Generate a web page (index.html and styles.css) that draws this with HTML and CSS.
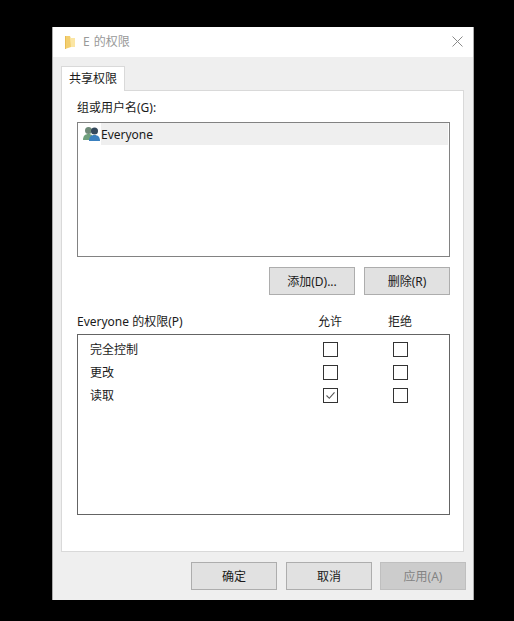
FILE: index.html
```html
<!DOCTYPE html>
<html lang="zh-CN">
<head>
    <meta charset="UTF-8">
    <title>E 的权限</title>
    <link rel="stylesheet" href="styles.css">
</head>
<body>
    <div class="dialog">
        <div class="titlebar">
            <svg class="folder-icon" width="10" height="15" viewBox="0 0 10 15">
                <path d="M0 1h5l1 3v8l-6 2z" fill="#f3cf70"/>
                <path d="M5 3h5v9H6z" fill="#fbe6a4"/>
                <path d="M0 1h1v13H0z" fill="#e9bd55"/>
            </svg>
            <span class="title">E 的权限</span>
            <svg class="close-icon" width="11" height="11" viewBox="0 0 11 11">
                <path d="M.5.5l10 10M10.5.5l-10 10" stroke="#8a8a8a" stroke-width="1" fill="none"/>
            </svg>
        </div>
        <div class="body">
            <div class="tabs">
                <div class="tab">共享权限</div>
            </div>
            <div class="panel">
                <div class="label">组或用户名(G):</div>
                <div class="user-list">
                    <div class="user-row">
                        <svg class="users-icon" width="17" height="16" viewBox="0 0 17 16">
                            <circle cx="5.5" cy="4.5" r="3.500" fill="#6f8a78"/>
                            <path d="M0 14c0-4 2-6 5.500-6s5 2 5 6z" fill="#6fa07c"/>
                            <circle cx="11.500" cy="5" r="3.500" fill="#34495c"/>
                            <path d="M6 15c0-4 2-6 5.500-6s5.500 2 5.500 6z" fill="#3a80bf"/>
                        </svg>
                        <span class="user-name">Everyone</span>
                    </div>
                </div>
                <div class="list-buttons">
                    <button class="btn">添加(D)...</button>
                    <button class="btn">删除(R)</button>
                </div>
                <div class="perm-header">
                    <span class="perm-title">Everyone 的权限(P)</span>
                    <span class="perm-col">允许</span>
                    <span class="perm-col">拒绝</span>
                </div>
                <div class="perm-list">
                    <div class="perm-row">
                        <span class="perm-name">完全控制</span>
                        <span class="cell"><span class="check"></span></span>
                        <span class="cell"><span class="check"></span></span>
                    </div>
                    <div class="perm-row">
                        <span class="perm-name">更改</span>
                        <span class="cell"><span class="check"></span></span>
                        <span class="cell"><span class="check"></span></span>
                    </div>
                    <div class="perm-row">
                        <span class="perm-name">读取</span>
                        <span class="cell">
                            <span class="check">
                                <svg width="11" height="11" viewBox="0 0 11 11">
                                    <path d="M1.500 5.500l2.800 2.800 5.200-6" stroke="#555" stroke-width="1.100" fill="none"/>
                                </svg>
                            </span>
                        </span>
                        <span class="cell"><span class="check"></span></span>
                    </div>
                </div>
            </div>
            <div class="footer">
                <button class="btn">确定</button>
                <button class="btn">取消</button>
                <button class="btn disabled">应用(A)</button>
            </div>
        </div>
    </div>
</body>
</html>
```

FILE: styles.css
```css
body {
    margin: 0;
    background-color: #000;
    font-family: "Noto Sans", "Noto Sans CJK SC", sans-serif;
    font-size: 12px;
    color: #1a1a1a;
}

.dialog {
    width: 420px;
    height: 573px;
    margin: 27px 0 0 52px;
    border-left: 1px solid #aaa;
    border-right: 1px solid #aaa;
    background-color: #efefef;
}

.titlebar {
    display: flex;
    align-items: center;
    height: 30px;
    padding: 0 10px 0 12px;
    background-color: #fff;
}

.folder-icon {
    margin-right: 8px;
}

.title {
    flex: 1;
    color: #999;
    font-size: 12px;
    word-spacing: 1px;
    line-height: 30px;
    height: 30px;
}

.close-icon {
    margin-bottom: 1px;
}

.body {
    padding: 9px 9px 0 8px;
}

.tabs {
    display: flex;
}

.tab {
    width: 62px;
    height: 24px;
    line-height: 24px;
    text-align: center;
    background-color: #fff;
    border: 1px solid #d9d9d9;
    border-bottom: none;
    position: relative;
    z-index: 1;
}

.panel {
    height: 462px;
    margin-top: -1px;
    padding: 0 14px 0 15px;
    background-color: #fff;
    border: 1px solid #d9d9d9;
    box-sizing: border-box;
    width: 403px;
}

.label {
    height: 16px;
    line-height: 16px;
    margin-top: 9px;
    margin-bottom: 6px;
}

.user-list {
    height: 135px;
    border: 1px solid #828282;
    box-sizing: border-box;
    padding: 0 1px;
    width: 373px;
}

.user-row {
    display: flex;
    align-items: center;
    height: 22px;
}

.users-icon {
    margin: 0 1px 0 4px;
    flex-shrink: 0;
}

.user-name {
    flex: 1;
    height: 22px;
    line-height: 23px;
    background-color: #efefef;
}

.list-buttons {
    display: flex;
    justify-content: flex-end;
    gap: 9px;
    margin-top: 10px;
    width: 373px;
}

.btn {
    width: 86px;
    height: 28px;
    padding: 0 0 1px;
    background-color: #e1e1e1;
    border: 1px solid #adadad;
    font-family: inherit;
    font-size: 12px;
    color: #1a1a1a;
}

.btn.disabled {
    background-color: #ccc;
    border-color: #bfbfbf;
    color: #838383;
}

.perm-header {
    display: flex;
    align-items: center;
    height: 16px;
    margin-top: 18px;
    margin-bottom: 5px;
    width: 373px;
}

.perm-title {
    width: 218px;
}

.perm-col {
    width: 70px;
    text-align: center;
}

.perm-list {
    height: 181px;
    width: 373px;
    padding-top: 3px;
    border: 1px solid #646464;
    box-sizing: border-box;
}

.perm-row {
    display: flex;
    align-items: center;
    height: 23px;
}

.perm-name {
    width: 217px;
    padding: 0 0 2px 12px;
    box-sizing: border-box;
}

.cell {
    display: flex;
    justify-content: center;
    width: 70px;
}

.check {
    display: flex;
    align-items: center;
    justify-content: center;
    width: 13px;
    height: 13px;
    background-color: #fff;
    border: 1px solid #333;
}

.footer {
    display: flex;
    justify-content: flex-end;
    gap: 8px;
    margin-top: 10px;
    margin-right: -2px;
}

.footer .btn:first-child {
    margin-right: 1px;
}
```
